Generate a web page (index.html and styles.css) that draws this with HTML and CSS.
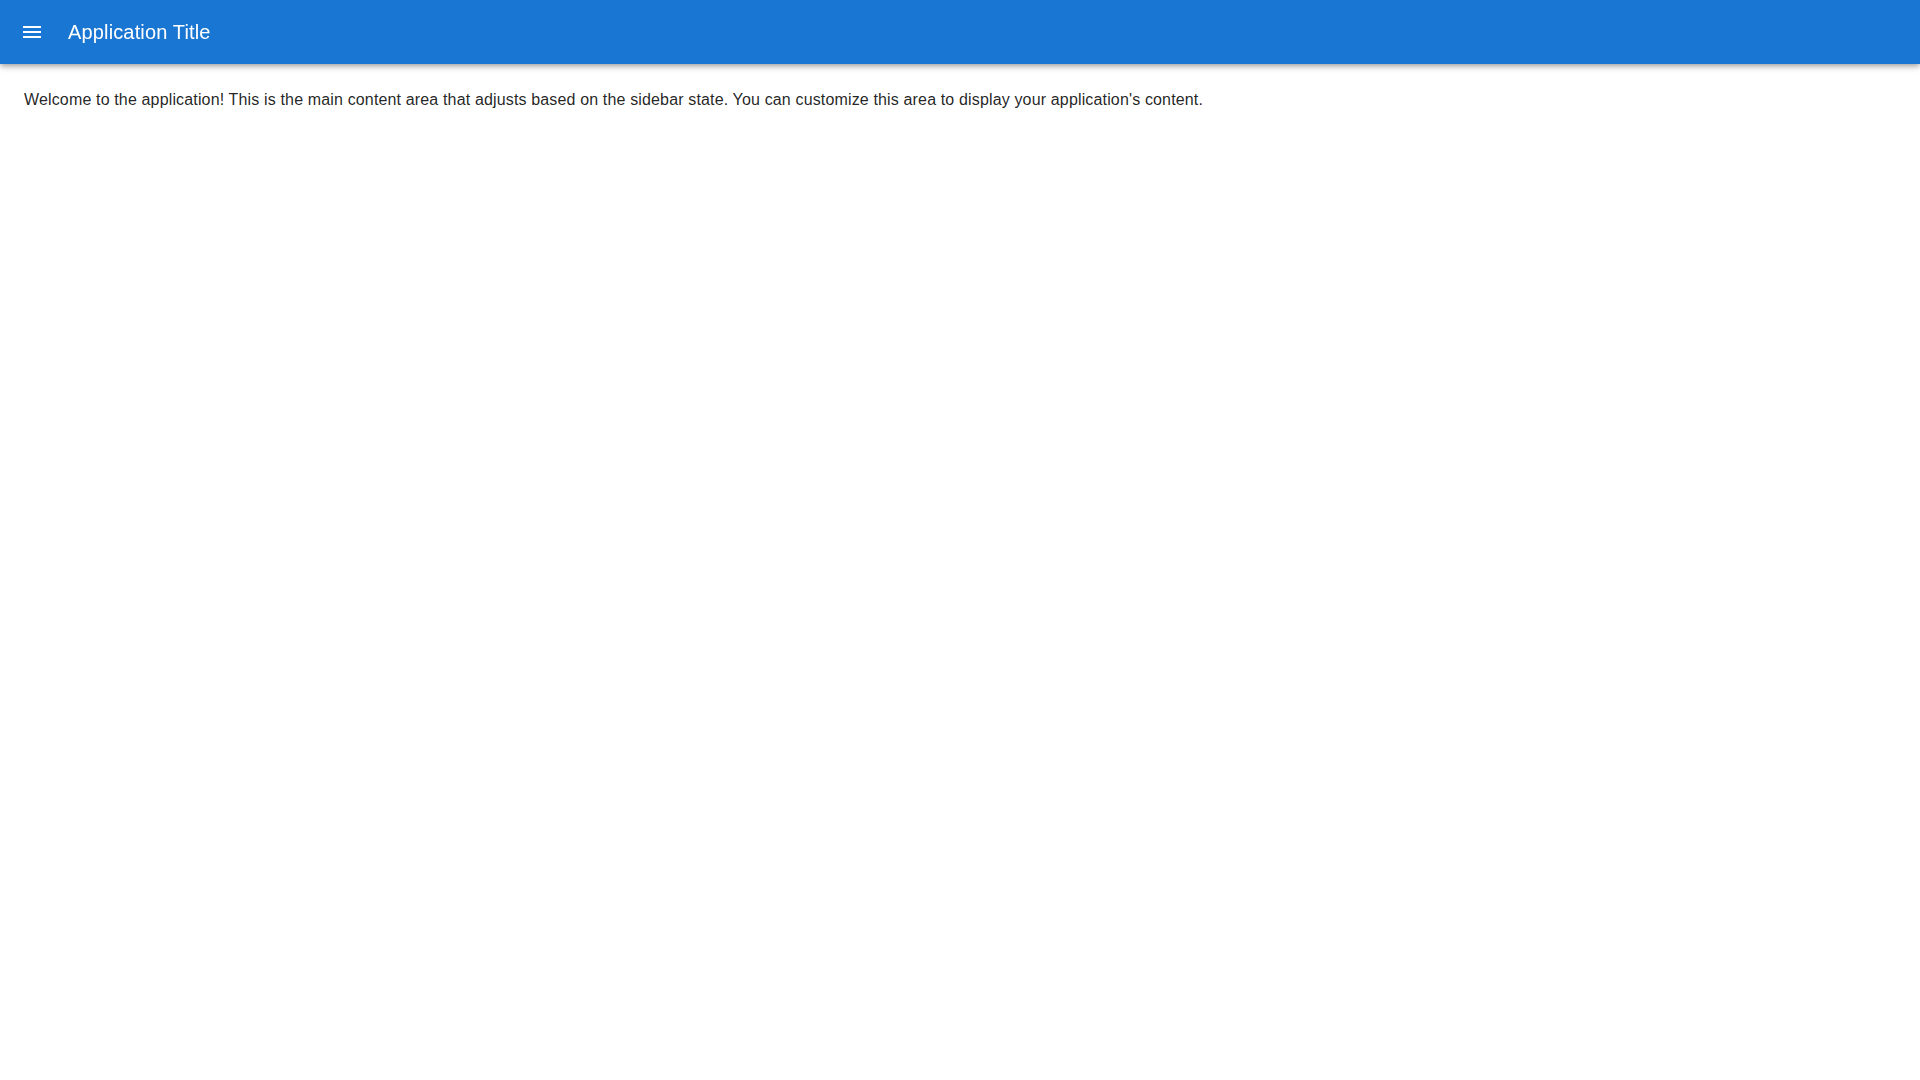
FILE: index.html
```html
<!DOCTYPE html>
<html lang="en">
<head>
<meta charset="utf-8">
<title>Application</title>
<link rel="stylesheet" href="styles.css">
</head>
<body>
<header class="appbar">
  <div class="toolbar">
    <button class="menu-btn" aria-label="menu">
      <svg viewBox="0 0 24 24" width="24" height="24"><path fill="currentColor" d="M3 18h18v-2H3v2zm0-5h18v-2H3v2zm0-7v2h18V6H3z"/></svg>
    </button>
    <h6 class="title">Application Title</h6>
  </div>
</header>
<main class="content">
  <p class="body-text">Welcome to the application! This is the main content area that adjusts based on the sidebar state. You can customize this area to display your application's content.</p>
</main>
</body>
</html>
```
FILE: styles.css
```css
* { box-sizing: border-box; }
html, body { margin: 0; padding: 0; }
body {
  background: #fff;
  font-family: "Liberation Sans", Arial, sans-serif;
  color: rgba(0,0,0,0.87);
}
.appbar {
  position: fixed;
  top: 0; left: 0; right: 0;
  background: #1976d2;
  color: #fff;
  box-shadow: 0px 2px 4px -1px rgba(0,0,0,0.2), 0px 4px 5px 0px rgba(0,0,0,0.14), 0px 1px 10px 0px rgba(0,0,0,0.12);
  z-index: 10;
}
.toolbar {
  display: flex;
  align-items: center;
  height: 64px;
  padding: 0 24px;
}
.menu-btn {
  display: flex;
  align-items: center;
  justify-content: center;
  margin-left: -12px;
  margin-right: 16px;
  padding: 8px;
  width: 40px;
  height: 40px;
  border: none;
  background: transparent;
  color: #fff;
  border-radius: 50%;
}
.title {
  margin: 0;
  font-size: 20px;
  font-weight: 500;
  line-height: 1.6;
  letter-spacing: 0.0075em;
}
.content {
  padding: 88px 24px 24px;
}
.body-text {
  margin: 0;
  font-size: 16px;
  line-height: 1.5;
  letter-spacing: 0.00938em;
}
```
